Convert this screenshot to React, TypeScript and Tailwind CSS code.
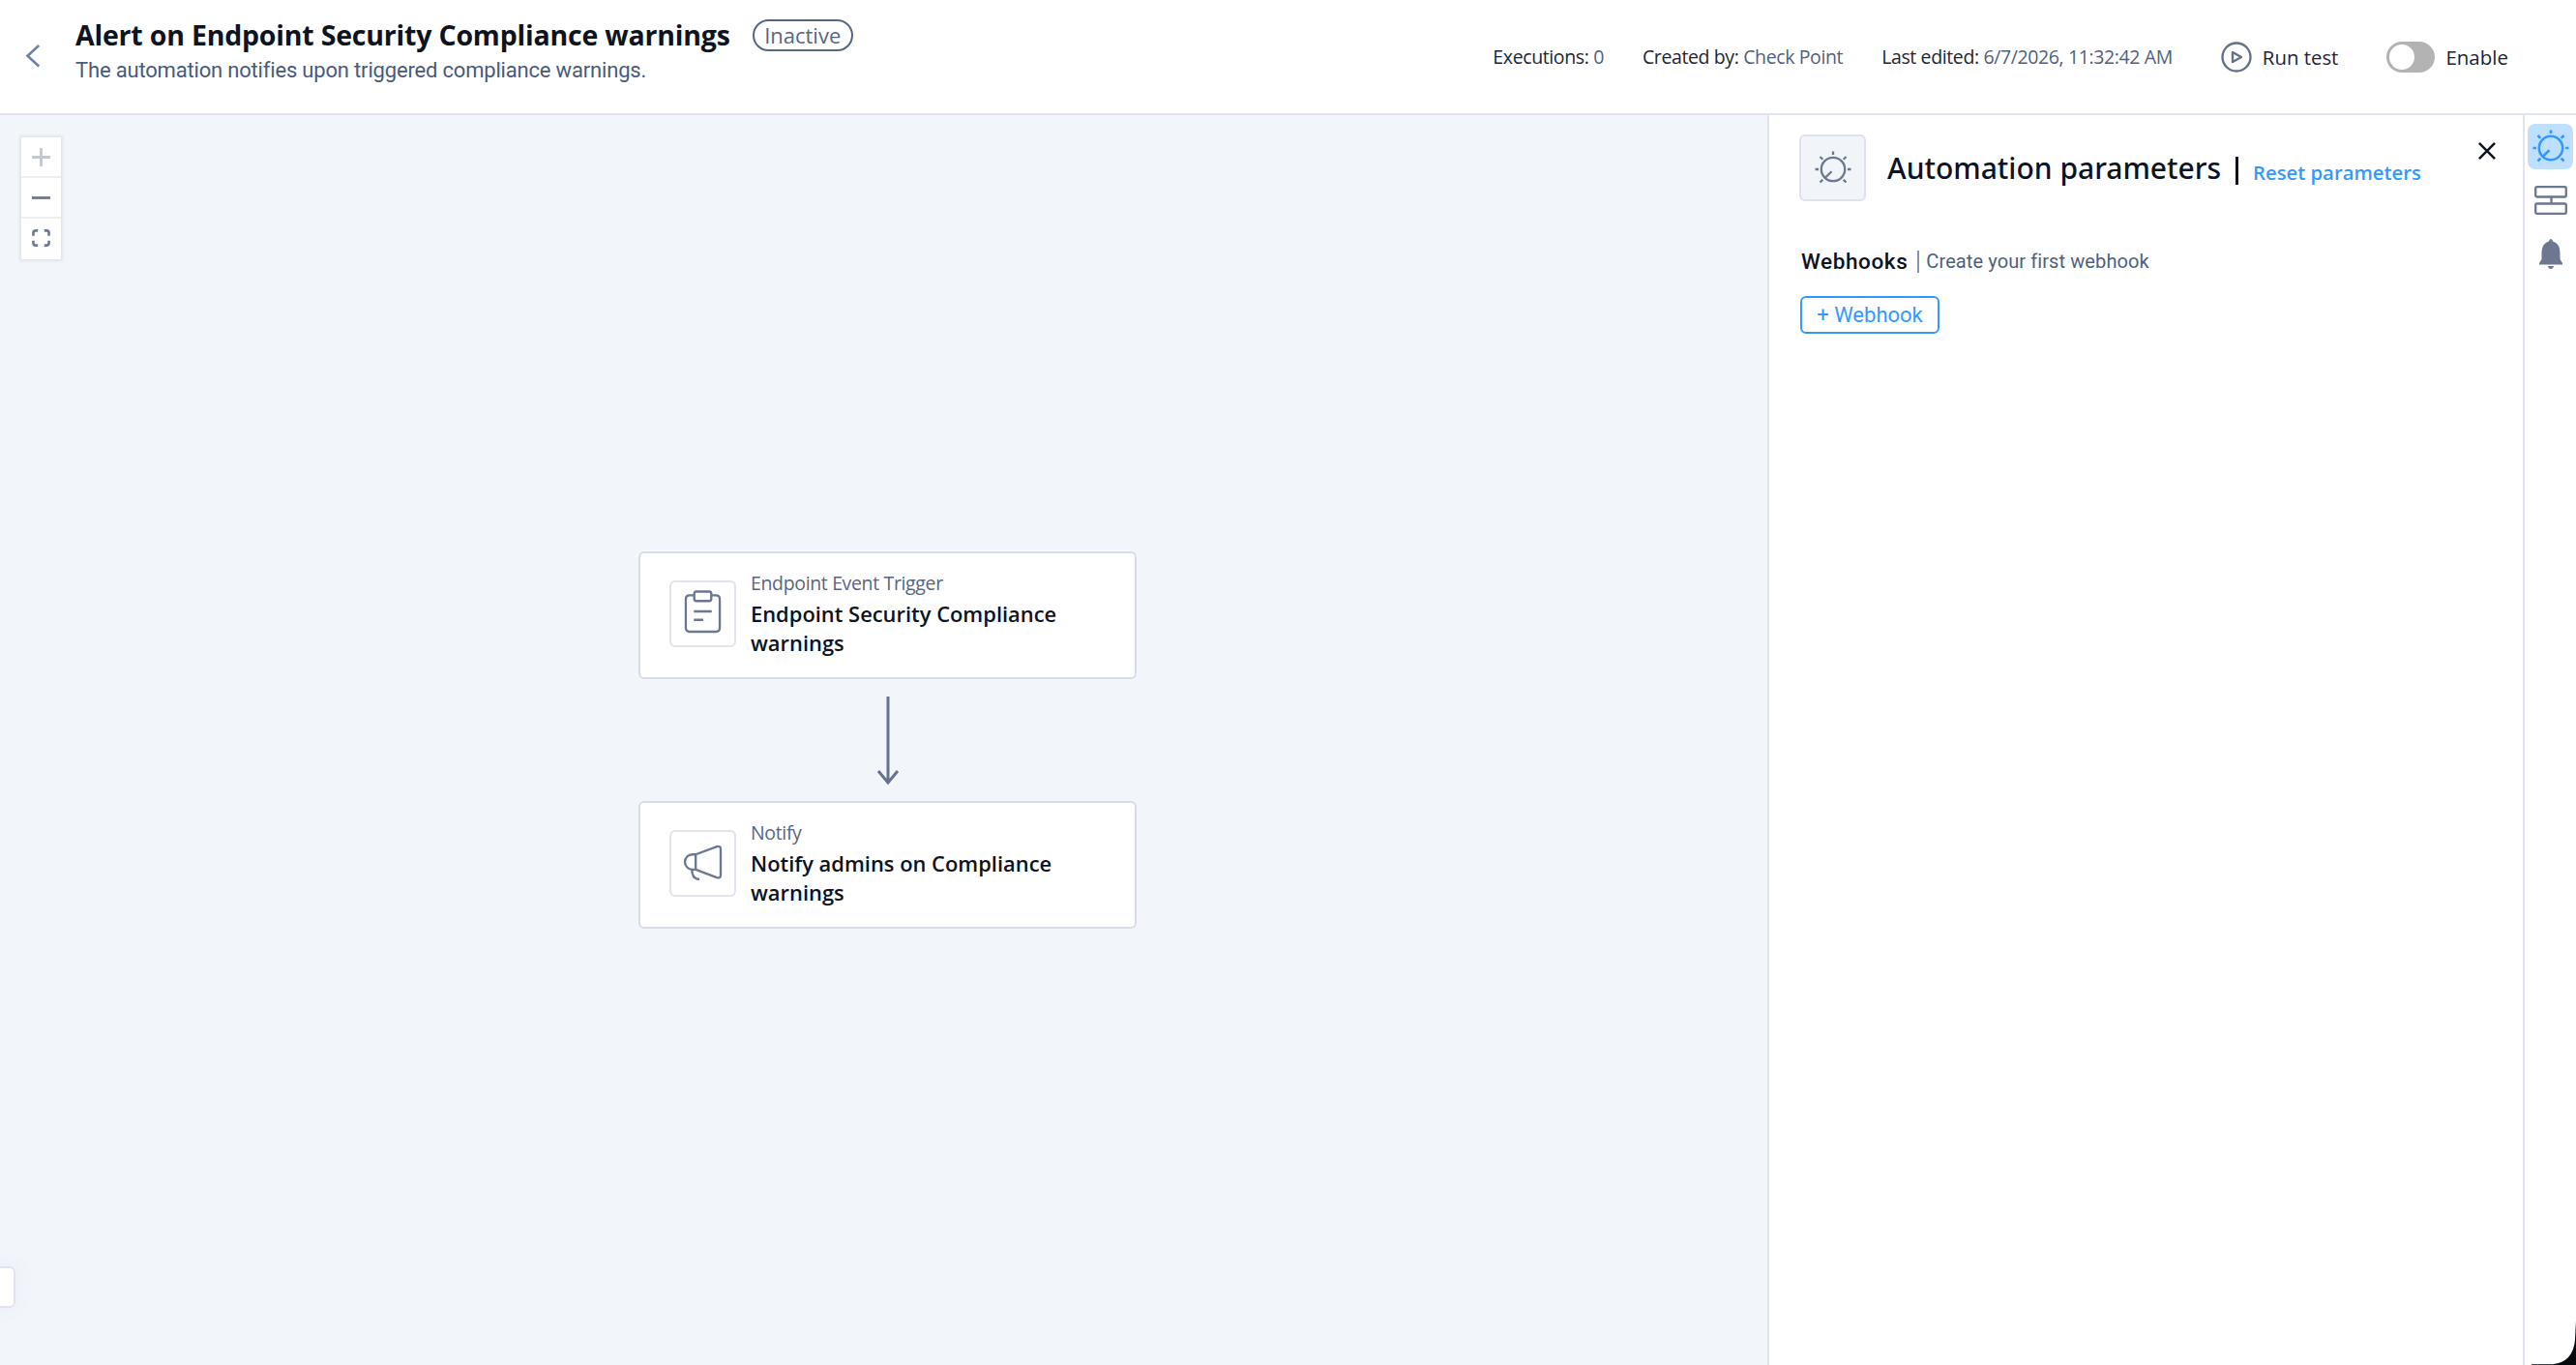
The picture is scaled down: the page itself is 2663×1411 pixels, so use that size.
import React from "react";

function Dial({ className }: { className: string }) {
  return (
    <svg viewBox="0 0 38 38" className={className} fill="none" stroke="currentColor">
      <circle cx="19" cy="20" r="12.2" />
      <path d="M19 1.5v3.500M0.500 20h3.500M34 20h3.500M5.500 7l2.800 2.800M32.500 7l-2.800 2.800M5.500 33.500l2.800-2.800M32.500 33.500l-2.800-2.800M10.500 29l7-6.800" />
    </svg>
  );
}

function Stat({ label, value }: { label: string; value: string }) {
  return (
    <div className="whitespace-nowrap text-[19.5px] leading-[28px] tracking-[-0.38px] text-[#1d2433]">
      {label} <span className="text-[#4f5f80]">{value}</span>
    </div>
  );
}

function Card({ kind, title, children }: { kind: string; title: string; children: React.ReactNode }) {
  return (
    <div className="flex h-[132px] w-[515px] rounded-[6px] border-2 border-[#d6dce8] bg-white pl-[30px]">
      <div className="mt-[28px] flex h-[69px] w-[69px] shrink-0 items-center justify-center rounded-[6px] border-2 border-[#e0e4ef] text-[#6b7890]">
        {children}
      </div>
      <div className="ml-[15px] mt-[17px] w-[350px]">
        <div className="text-[19.5px] leading-[28px] tracking-[-0.35px] text-[#576683]">{kind}</div>
        <div className="mt-[3px] text-[21.900px] font-semibold leading-[30px] text-[#0d131f]">{title}</div>
      </div>
    </div>
  );
}

export default function App() {
  return (
    <div className="flex h-[1411px] w-[2663px] flex-col overflow-hidden bg-white font-['Open_Sans',sans-serif]">
      <header className="flex h-[119px] shrink-0 border-b-2 border-[#e0e4ef]">
        <svg viewBox="0 0 16 26" className="ml-[26px] mt-[45px] h-[26px] w-[16px] text-[#7080a8]" fill="none" stroke="currentColor" strokeWidth="2.6">
          <path d="M14.200 2L2.500 12.700l11.700 10.800" />
        </svg>
        <div className="ml-[36px] mt-[14px]">
          <div className="flex items-center">
            <h1 className="whitespace-nowrap text-[28.5px] font-bold leading-[44px] tracking-[-0.2px] text-[#0d131f]">Alert on Endpoint Security Compliance warnings</h1>
            <span className="ml-[23px] flex h-[33px] w-[104px] items-center justify-center rounded-full border-2 border-[#576683] text-[22px] text-[#576683]">Inactive</span>
          </div>
          <p className="mt-px whitespace-nowrap font-['Roboto',sans-serif] text-[22px] leading-[28px] tracking-[-0.18px] text-[#4a5a7c]">The automation notifies upon triggered compliance warnings.</p>
        </div>
        <div className="ml-auto mr-[70px] flex h-[118px] items-center">
          <div className="flex gap-[40px]">
            <Stat label="Executions:" value="0" />
            <Stat label="Created by:" value="Check Point" />
            <Stat label="Last edited:" value="6/7/2026, 11:32:42 AM" />
          </div>
          <svg viewBox="0 0 32 32" className="ml-[50px] h-[32px] w-[32px] text-[#64718c]" fill="none" stroke="currentColor" strokeWidth="2.4">
            <circle cx="16" cy="16" r="14.500" />
            <path d="M12 11v10l9-5z" strokeLinejoin="round" />
          </svg>
          <span className="ml-[11px] mt-px text-[20.400px] text-[#1d2433]">Run test</span>
          <span className="ml-[50px] flex h-[32px] w-[50px] items-center rounded-full bg-[#b3b3b3] pl-[3px]">
            <span className="h-[26px] w-[26px] rounded-full bg-white" />
          </span>
          <span className="ml-[11px] mt-px text-[20.500px] text-[#1d2433]">Enable</span>
        </div>
      </header>
      <div className="relative flex min-h-0 flex-1">
        <main className="relative flex-1 bg-[#f2f5fa]">
          <div className="absolute left-[22px] top-[23px] flex w-[41px] flex-col divide-y-2 divide-[#eeeeee] bg-white text-[#6b7a96] shadow-[0_0_3px_2px_rgba(0,0,0,0.07)]">
            <div className="flex h-[42px] items-center justify-center text-[#c2c8d3]">
              <svg viewBox="0 0 20 20" className="h-[19px] w-[19px]" stroke="currentColor" strokeWidth="3"><path d="M10 0v20M0 10h20" /></svg>
            </div>
            <div className="flex h-[42px] items-center justify-center">
              <svg viewBox="0 0 20 20" className="h-[19px] w-[19px]" stroke="currentColor" strokeWidth="3"><path d="M0 10h20" /></svg>
            </div>
            <div className="flex h-[42px] items-center justify-center">
              <svg viewBox="0 0 20 19" className="mb-[2px] h-[18px] w-[19px]" fill="none" stroke="currentColor" strokeWidth="2.800"><path d="M1.500 7V4q0-2.500 2.500-2.500h2.500M13.500 1.500H16q2.500 0 2.500 2.500v3M18.500 12.500v2.500q0 2.500-2.500 2.500h-2.500M6.500 17.500H4q-2.500 0-2.500-2.500V12.500" /></svg>
            </div>
          </div>
          <div className="absolute left-[660px] top-[451px] flex flex-col items-center">
            <Card kind="Endpoint Event Trigger" title="Endpoint Security Compliance warnings">
              <svg viewBox="0 0 40 46" className="mb-[4px] h-[45px] w-[39px]" fill="none" stroke="currentColor" strokeWidth="2.4">
                <path d="M11 5.500H6Q2 5.500 2 9.500V40q0 4 4 4h28q4 0 4-4V9.500q0-4-4-4h-5" />
                <rect x="11" y="1.500" width="18" height="10" rx="2" />
                <path d="M10.500 22.500h19M10.500 31.500h10" />
              </svg>
            </Card>
            <svg viewBox="0 0 24 92" className="my-[17px] h-[92px] w-[24px] text-[#65738d]" fill="none" stroke="currentColor" strokeWidth="3">
              <path d="M12 1v88M2 78l10 12 10-12" />
            </svg>
            <Card kind="Notify" title="Notify admins on Compliance warnings">
              <svg viewBox="0 0 42 38" className="mb-[2px] h-[37px] w-[41px]" fill="none" stroke="currentColor" strokeWidth="2.4" strokeLinejoin="round">
                <path d="M13.500 10.500L36 2.200q4-1 4 2.500v28q0 3.500-4 2.300L13.500 26.500zM13.500 10.500H10a8 8 0 0 0 0 16h3.500M9.500 27q0 9.500 8 10" />
              </svg>
            </Card>
          </div>
          <div className="absolute left-[-10px] top-[1190px] h-[43px] w-[26px] rounded-[6px] border-2 border-[#e0e4ef] bg-white shadow-[0_0_20px_rgba(120,140,220,0.08)]" />
        </main>
        <aside className="w-[781px] shrink-0 border-l-2 border-[#e0e4ef] bg-white">
          <div className="flex h-[89px] pl-[31px] pt-[20px]">
            <div className="flex h-[69px] w-[69px] shrink-0 items-center justify-center rounded-[6px] border-2 border-[#dde2ed] bg-[#f1f5fa] text-[#6b7890]">
              <Dial className="h-[38px] w-[38px] stroke-[2.3px]" />
            </div>
            <h2 className="ml-[22px] mt-[13px] whitespace-nowrap font-['Noto_Sans',sans-serif] text-[30px] font-medium leading-[44px] text-[#0d131f]">Automation parameters</h2>
            <span className="ml-[15px] mt-[23px] h-[29px] w-[3px] bg-[#0d131f]" />
            <a className="ml-[15px] mt-[24px] whitespace-nowrap text-[20.300px] font-semibold leading-[30px] text-[#3399ff]">Reset parameters</a>
            <svg viewBox="0 0 20 20" className="ml-auto mr-[28px] mt-[8px] h-[18px] w-[18px] text-[#0d131f]" stroke="currentColor" strokeWidth="2.700"><path d="M1 1l18 18M19 1L1 19" /></svg>
          </div>
          <div className="ml-[33px] mt-[47px] flex h-[30px] items-center whitespace-nowrap font-['Roboto',sans-serif]">
            <span className="mt-[2px] text-[22.500px] font-medium tracking-[0.6px] text-[#0d131f]">Webhooks</span>
            <span className="ml-[10px] h-[23px] w-[2px] bg-[#8a94ad]" />
            <span className="ml-[7px] text-[20px] tracking-[0.1px] text-[#4f5f80]">Create your first webhook</span>
          </div>
          <button className="ml-[32px] mt-[21px] flex h-[39px] w-[144px] items-center justify-center whitespace-nowrap rounded-[6px] border-2 border-[#3399ff] font-['Roboto',sans-serif] text-[22px] text-[#3399ff]">+ Webhook</button>
        </aside>
        <nav className="flex w-[55px] shrink-0 flex-col items-center border-l-2 border-[#e0e4ef] bg-white pt-[9px] text-[#6b7890]">
          <div className="flex h-[47px] w-[47px] items-center justify-center rounded-[8px] bg-[#bfdfff] text-[#3399ff]">
            <Dial className="h-[38px] w-[38px] stroke-[2.6px]" />
          </div>
          <svg viewBox="0 0 34 30" className="mt-[17px] h-[30px] w-[34px]" fill="none" stroke="currentColor" strokeWidth="2.300">
            <rect x="1.200" y="1.200" width="31.600" height="10.300" rx="1.500" /><rect x="1.200" y="18.500" width="31.600" height="10.300" rx="1.500" /><path d="M17.500 11.500v7" />
          </svg>
          <svg viewBox="0 0 24 31" className="mt-[25px] h-[31px] w-[24px]" fill="currentColor">
            <path d="M12 0q1.700 0 2 2.500Q21.500 5 21.500 14v7l2.500 4v1.500H0V25l2.500-4v-7Q2.500 5 10 2.500 10.300 0 12 0zM9 28h6q-.5 3-3 3t-3-3z" />
          </svg>
        </nav>
        <svg viewBox="0 0 46 46" className="absolute bottom-0 right-0 h-[46px] w-[46px]"><path d="M46 0v46H0v-.8h22Q43 43 45 20z" fill="#05090b" /></svg>
      </div>
    </div>
  );
}
